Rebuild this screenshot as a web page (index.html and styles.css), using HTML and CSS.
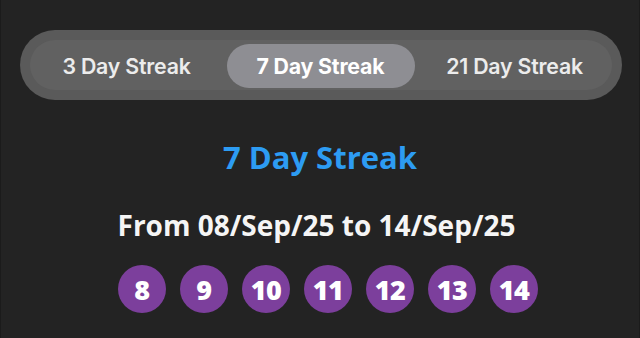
FILE: index.html
```html
<!DOCTYPE html>
<html>
<head>
<meta charset="utf-8">
<link rel="stylesheet" href="styles.css">
</head>
<body>
<div class="app">
  <div class="seg-outer">
    <div class="seg-inner">
      <div class="seg"><span class="seg-label">3 Day Streak</span></div>
      <div class="seg seg-active"><span class="seg-label">7 Day Streak</span></div>
      <div class="seg"><span class="seg-label">21 Day Streak</span></div>
    </div>
  </div>
  <h1 class="title">7 Day Streak</h1>
  <p class="range">From 08/Sep/25 to 14/Sep/25</p>
  <div class="days">
    <span class="day">8</span>
    <span class="day">9</span>
    <span class="day">10</span>
    <span class="day">11</span>
    <span class="day">12</span>
    <span class="day">13</span>
    <span class="day">14</span>
  </div>
</div>
</body>
</html>
```
FILE: styles.css
```css
html, body {
  margin: 0;
  padding: 0;
  background: #232323;
}
.app {
  width: 640px;
  height: 338px;
  box-sizing: border-box;
  background: #232323;
  border-left: 1px solid #1b1b1b;
  border-right: 1px solid #1b1b1b;
  margin: 0;
  padding-top: 30px;
  display: flex;
  flex-direction: column;
  align-items: center;
  overflow: hidden;
}
.seg-outer {
  width: 602px;
  height: 70px;
  box-sizing: border-box;
  border-radius: 35px;
  background: #5a5a5a;
  padding: 10px;
  margin-left: 1px;
}
.seg-inner {
  height: 50px;
  border-radius: 25px;
  background: #616161;
  display: grid;
  grid-template-columns: repeat(3, 1fr);
  padding: 4px 0 2px;
  box-sizing: border-box;
}
.seg {
  margin: 0 3px;
  border-radius: 22px;
  display: flex;
  align-items: center;
  justify-content: center;
}
.seg-active {
  background: #8e8e93;
}
.seg-label {
  font-family: Inter, "Liberation Sans", sans-serif;
  font-weight: 600;
  font-size: 21.3px;
  color: #ececec;
  letter-spacing: -0.2px;
}
.seg-active .seg-label {
  color: #ffffff;
  font-weight: 700;
}
.title {
  margin: 39px 0 0;
  font-family: "Open Sans", "Liberation Sans", sans-serif;
  font-weight: 700;
  font-size: 31px;
  line-height: 36px;
  color: #2d9cf3;
}
.range {
  margin: 34px 0 0;
  margin-left: -7px;
  font-family: "Open Sans", "Liberation Sans", sans-serif;
  font-weight: 700;
  font-size: 28px;
  line-height: 32px;
  color: #f5f5f5;
}
.days {
  margin-top: 24px;
  display: flex;
  gap: 14px;
  padding-left: 16px;
}
.day {
  width: 48px;
  height: 48px;
  border-radius: 50%;
  background: #7c3f9c;
  color: #ffffff;
  display: flex;
  align-items: center;
  justify-content: center;
  font-family: "Open Sans", "Liberation Sans", sans-serif;
  font-weight: 800;
  font-size: 27px;
  letter-spacing: -0.5px;
}
```
